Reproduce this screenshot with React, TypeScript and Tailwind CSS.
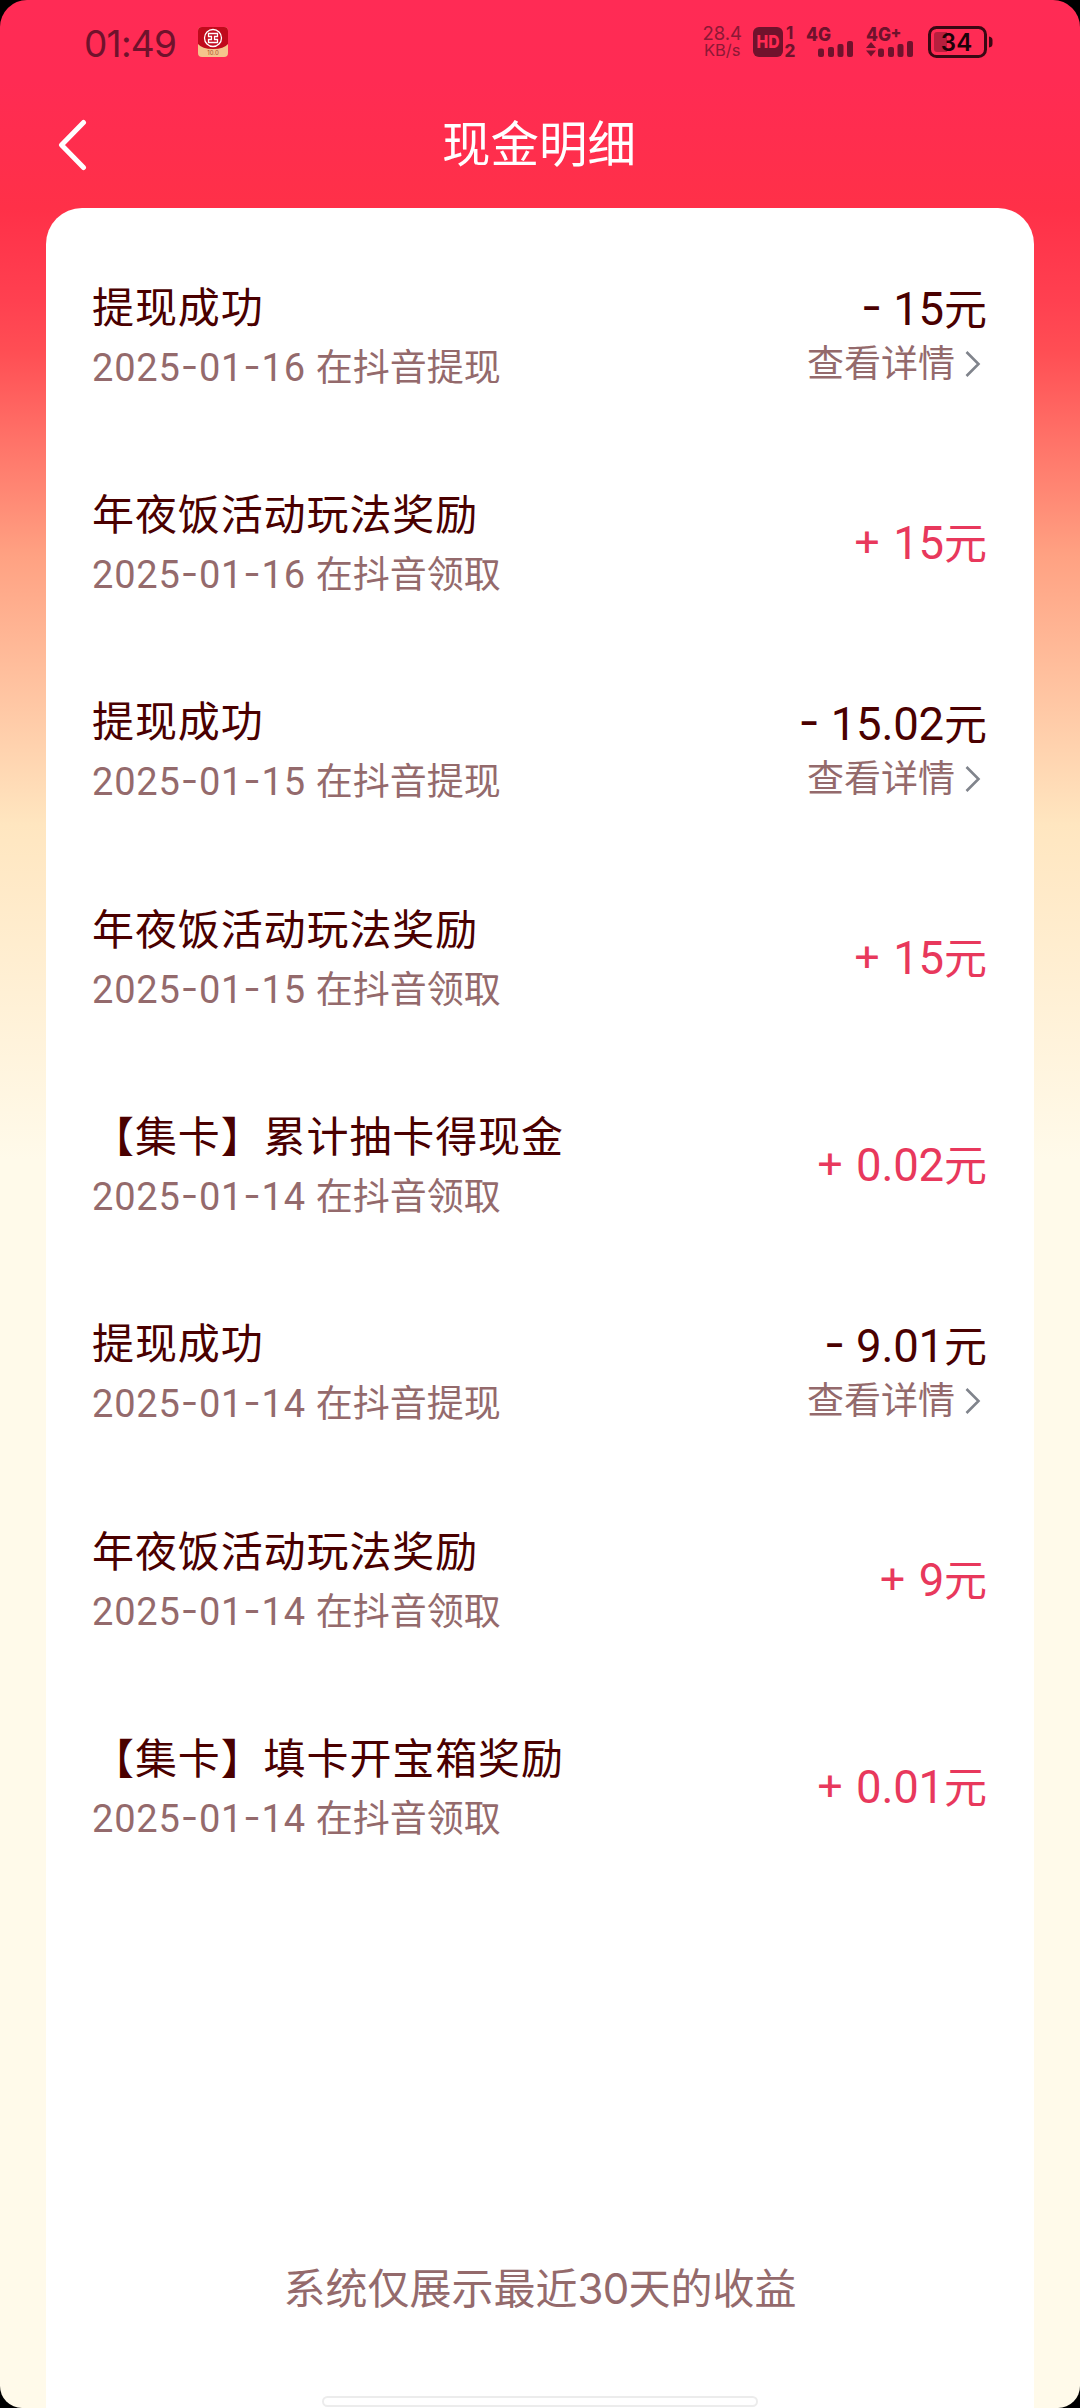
import { Fragment } from 'react'

interface Entry {
  title: string
  date: string
  source: string
  sign: '+' | '-'
  amount: string
}

const entries: Entry[] = [
  { title: '提现成功', date: '2025-01-16', source: '在抖音提现', sign: '-', amount: '15' },
  { title: '年夜饭活动玩法奖励', date: '2025-01-16', source: '在抖音领取', sign: '+', amount: '15' },
  { title: '提现成功', date: '2025-01-15', source: '在抖音提现', sign: '-', amount: '15.02' },
  { title: '年夜饭活动玩法奖励', date: '2025-01-15', source: '在抖音领取', sign: '+', amount: '15' },
  { title: '【集卡】累计抽卡得现金', date: '2025-01-14', source: '在抖音领取', sign: '+', amount: '0.02' },
  { title: '提现成功', date: '2025-01-14', source: '在抖音提现', sign: '-', amount: '9.01' },
  { title: '年夜饭活动玩法奖励', date: '2025-01-14', source: '在抖音领取', sign: '+', amount: '9' },
  { title: '【集卡】填卡开宝箱奖励', date: '2025-01-14', source: '在抖音领取', sign: '+', amount: '0.01' },
]

function BankIcon() {
  return (
    <svg width="30" height="30" viewBox="0 0 30 30" className="ml-[22px]">
      <defs>
        <clipPath id="bank">
          <rect width="30" height="30" rx="4" />
        </clipPath>
      </defs>
      <g clipPath="url(#bank)">
        <rect width="30" height="30" fill="#f5c48c" />
        <path d="M0 0H30V17Q26 22 15 22T0 17Z" fill="#c00a1c" />
        <circle cx="15" cy="11" r="8.5" fill="none" stroke="#fff" strokeWidth="1.3" />
        <path
          d="M10.5 6.5H19.5V9.5H16.5V12.5H19.5V15.5H10.5V12.5H13.5V9.5H10.5Z"
          fill="none"
          stroke="#fff"
          strokeWidth="1.3"
        />
      </g>
      <text x="15" y="28.4" textAnchor="middle" fontSize="6" fill="#a5502f">
        10.0
      </text>
    </svg>
  )
}

function HdIcon() {
  return (
    <svg width="46" height="32" viewBox="0 0 46 32" className="ml-[10px] overflow-visible" fill="#70122c">
      <rect x="1" y="1" width="30" height="30" rx="6" />
      <text
        x="4.5"
        y="22.4"
        fontSize="18"
        fontWeight="800"
        fill="#ff2b53"
        textLength="23"
        lengthAdjust="spacingAndGlyphs"
      >
        HD
      </text>
      <text x="34" y="13" fontSize="17" fontWeight="700">
        1
      </text>
      <text x="32.5" y="30.8" fontSize="17" fontWeight="800">
        2
      </text>
    </svg>
  )
}

function Signal({ plus = false }: { plus?: boolean }) {
  return (
    <svg
      width="50"
      height="32"
      viewBox="0 0 50 32"
      fill="#70122c"
      className={plus ? 'ml-[10px] overflow-visible' : 'ml-[8px] overflow-visible'}
    >
      <text x="0" y="15" fontSize="18.5" fontWeight="800" textLength="25" lengthAdjust="spacingAndGlyphs">
        4G
      </text>
      {plus && (
        <>
          <text x="24.5" y="12" fontSize="16" fontWeight="800">
            +
          </text>
          <path d="M5 16L10 22H0Z" />
          <path d="M5 30.5L10 24.5H0Z" />
        </>
      )}
      <rect x="12" y="22.5" width="6" height="8.5" rx="2" />
      <rect x="22" y="21" width="6" height="10" rx="2" />
      <rect x="31.5" y="18" width="6" height="13" rx="2" />
      <rect x="41" y="15" width="6" height="16" rx="2" />
    </svg>
  )
}

function Battery() {
  return (
    <svg width="66" height="34" viewBox="0 0 66 34" className="ml-[12px]">
      <rect x="1.5" y="2.5" width="56" height="29" rx="7" fill="none" stroke="#3a0813" strokeWidth="3" />
      <path d="M9 7H19V27H9Q6 27 6 24V10Q6 7 9 7Z" fill="#b81f3e" />
      <path d="M61 11.5Q64.5 12 64.5 15V19Q64.5 22 61 22.5Z" fill="#3a0813" />
      <text x="28.5" y="25.6" textAnchor="middle" fontSize="24" fontWeight="600" fill="#1c0208">
        34
      </text>
    </svg>
  )
}

function StatusBar() {
  return (
    <div className="flex h-[84px] items-center justify-between pr-[86px] pl-[84px] text-[#70122c]">
      <div className="flex items-center">
        <span className="relative top-[2px] text-[37px] leading-[44px] tracking-[-0.02em]">01:49</span>
        <BankIcon />
      </div>
      <div className="flex items-center">
        <div className="flex flex-col items-center text-[18.5px] leading-[17px] text-[#8c1836]">
          <span>28.4</span>
          <span className="text-[16.5px]">KB/s</span>
        </div>
        <HdIcon />
        <Signal />
        <Signal plus />
        <Battery />
      </div>
    </div>
  )
}

function DateText({ value }: { value: string }) {
  return (
    <span className="mr-[10px] font-['Roboto'] text-[38px] tracking-[0.8px]">
      {value.split('-').map((part, i) => (
        <Fragment key={i}>
          {i > 0 && <span className="font-['Inter'] [font-feature-settings:'case']">-</span>}
          {part}
        </Fragment>
      ))}
    </span>
  )
}

function Row({ entry }: { entry: Entry }) {
  const withdrawn = entry.sign === '-'

  return (
    <li className="flex h-[207.35px] items-center justify-between">
      <div className="flex flex-col gap-[6px]">
        <h2 className="text-[42px] leading-[58px] tracking-[0.9px] text-[#4a0000]">{entry.title}</h2>
        <p className="h-[50px] text-[37px] leading-[48px] text-[#946a6c]">
          <DateText value={entry.date} />
          {entry.source}
        </p>
      </div>
      <div className="mr-[1px] flex flex-col items-end gap-[3px]">
        <div
          className={`flex h-[54px] items-baseline text-[45px] leading-[52px] ${withdrawn ? 'text-[#4a0000]' : 'text-[#e8385c]'}`}
        >
          <span className="mr-[11px] text-[46px] [font-feature-settings:'case']">{entry.sign}</span>
          <span className="font-['Roboto'] text-[45.5px] tracking-[-0.2px]">{entry.amount}</span>
          <span className="text-[43px]">元</span>
        </div>
        {withdrawn && (
          <a className="flex items-center text-[37px] leading-[50px] text-[#946a6c]">
            查看详情
            <svg width="16" height="28" viewBox="0 0 16 28" className="mr-[6px] ml-[10px]">
              <path d="M1.5 2L13.5 14L1.5 26" fill="none" stroke="#80848c" strokeWidth="2.6" />
            </svg>
          </a>
        )}
      </div>
    </li>
  )
}

export default function App() {
  return (
    <div className="h-[2408px] w-[1080px] bg-black font-['Inter','Noto_Sans_CJK_SC',sans-serif]">
      <div className="flex h-full flex-col overflow-hidden rounded-t-[27px] rounded-b-[22px] bg-[linear-gradient(180deg,#ff2b55_0px,#ff2b53_80px,#ff3048_208px,#ff4050_300px,#ff4e54_352px,#ffa182_555px,#ffe6c0_825px,#fffaea_1160px,#fffaea_2408px)]">
        <StatusBar />
        <header className="mb-[3px] flex h-[121px] items-center justify-between px-[58px]">
          <svg width="30" height="52" viewBox="0 0 30 52">
            <path
              d="M25.5 3.5L3.5 26L25.5 48.5"
              fill="none"
              stroke="#fff"
              strokeWidth="5"
              strokeLinecap="round"
              strokeLinejoin="round"
            />
          </svg>
          <h1 className="text-[48.5px] leading-[60px] text-white">现金明细</h1>
          <div className="w-[32px]" />
        </header>
        <main className="mx-[46px] flex flex-1 flex-col rounded-t-[36px] bg-white px-[46px] pt-[24px]">
          <ul>
            {entries.map((entry, i) => (
              <Row key={i} entry={entry} />
            ))}
          </ul>
          <p className="mt-auto text-center text-[42px] leading-[60px] text-[#946a6c]">
            系统仅展示最近<span className="tracking-[-0.02em]">30</span>天的收益
          </p>
          <div className="mx-auto mt-[77px] mb-[1px] h-[11px] w-[436px] rounded-full border-2 border-[#ececec] bg-white" />
        </main>
      </div>
    </div>
  )
}
